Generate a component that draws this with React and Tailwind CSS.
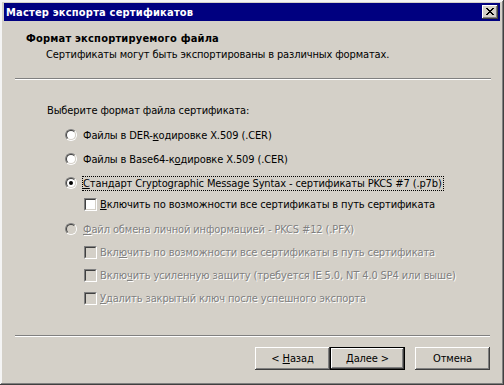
import React from "react";

function Radio({ checked, disabled }) {
  return (
    <span className="relative w-[12px] h-[12px] shrink-0 rounded-full border border-t-[#808080] border-l-[#808080] border-r-white border-b-white">
      <span
        className={
          "absolute inset-0 rounded-full border border-t-[#404040] border-l-[#404040] border-r-[#d4d0c8] border-b-[#d4d0c8] flex items-center justify-center " +
          (disabled ? "bg-[#d4d0c8]" : "bg-white")
        }
      >
        {checked ? <span className="w-[4px] h-[4px] rounded-full bg-black" /> : null}
      </span>
    </span>
  );
}

function Check({ disabled }) {
  return (
    <span className="w-[13px] h-[13px] shrink-0 border border-t-[#808080] border-l-[#808080] border-r-white border-b-white">
      <span
        className={
          "block w-full h-full border border-t-[#404040] border-l-[#404040] border-r-[#d4d0c8] border-b-[#d4d0c8] " +
          (disabled ? "bg-[#d4d0c8]" : "bg-white")
        }
      />
    </span>
  );
}

function Btn({ children, def }) {
  return (
    <div
      className={
        "w-[75px] h-[23px] flex items-center justify-center " +
        (def ? "border border-black" : "")
      }
    >
      <div className="w-full h-full flex items-center justify-center bg-[#d4d0c8] shadow-[inset_-1px_-1px_#404040,inset_1px_1px_#ffffff,inset_-2px_-2px_#808080,inset_2px_2px_#d4d0c8]">
        {children}
      </div>
    </div>
  );
}

const dis = "text-[#808080] [text-shadow:1px_1px_0_#ffffff]";

export default function App() {
  return (
    <div className="w-[504px] h-[385px] bg-[#d4d0c8] text-[11px] leading-[13px] tracking-[-0.12px] text-black [font-family:'DejaVu_Sans_Condensed','DejaVu_Sans',sans-serif] shadow-[inset_-1px_-1px_#404040,inset_1px_1px_#f4f4f4,inset_-2px_-2px_#808080,inset_2px_2px_#f4f4f4] pt-[3px] px-[4px] flex flex-col">
      {/* Title bar */}
      <div className="h-[18px] bg-[#000080] flex items-center justify-between pl-[2px] pr-[2px]">
        <span className="text-white font-bold tracking-[0.2px]">Мастер экспорта сертификатов</span>
        <div className="w-[16px] h-[14px] bg-[#d4d0c8] shadow-[inset_-1px_-1px_#404040,inset_1px_1px_#ffffff,inset_-2px_-2px_#808080,inset_2px_2px_#d4d0c8] relative">
          <svg width="16" height="14" viewBox="0 0 16 14" className="absolute left-0 top-0" shapeRendering="crispEdges">
            <g fill="#000">
              <rect x="4" y="3" width="2" height="1" />
              <rect x="10" y="3" width="2" height="1" />
              <rect x="5" y="4" width="2" height="1" />
              <rect x="9" y="4" width="2" height="1" />
              <rect x="6" y="5" width="4" height="1" />
              <rect x="7" y="6" width="2" height="1" />
              <rect x="6" y="7" width="4" height="1" />
              <rect x="5" y="8" width="2" height="1" />
              <rect x="9" y="8" width="2" height="1" />
              <rect x="4" y="9" width="2" height="1" />
              <rect x="10" y="9" width="2" height="1" />
            </g>
          </svg>
        </div>
      </div>

      {/* Header */}
      <div className="ml-[22px] mt-[11px] font-bold tracking-[0.2px]">Формат экспортируемого файла</div>
      <div className="ml-[42px] mt-[3px]">Сертификаты могут быть экспортированы в различных форматах.</div>
      <div className="ml-[11px] mr-[9px] mt-[17px] h-[2px] border-t border-t-[#808080] border-b border-b-white" />

      {/* Body */}
      <div className="ml-[43px] mt-[24px]">Выберите формат файла сертификата:</div>

      <div className="flex items-center h-[16px] ml-[61px] mt-[10px]">
        <Radio />
        <span className="ml-[5px] border border-transparent px-0">
          Файлы в DER-<span className="underline">к</span>одировке X.509 (.CER)
        </span>
      </div>
      <div className="flex items-center h-[16px] ml-[61px] mt-[8px]">
        <Radio />
        <span className="ml-[5px] border border-transparent">
          Файлы в Base64-к<span className="underline">о</span>дировке X.509 (.CER)
        </span>
      </div>
      <div className="flex items-center h-[16px] ml-[61px] mt-[8px]">
        <Radio checked />
        <span className="ml-[5px] border border-dotted border-black pr-[1px]">
          <span className="underline">С</span>тандарт Cryptographic Message Syntax - сертификаты PKCS #7 (.p7b)
        </span>
      </div>
      <div className="flex items-center h-[16px] ml-[80px] mt-[5px]">
        <Check />
        <span className="ml-[2px] border border-transparent">
          <span className="underline">В</span>ключить по возможности все сертификаты в путь сертификата
        </span>
      </div>
      <div className="flex items-center h-[16px] ml-[61px] mt-[9px]">
        <Radio disabled />
        <span className={"ml-[5px] border border-transparent " + dis}>
          <span className="underline">Ф</span>айл обмена личной информацией - PKCS #12 (.PFX)
        </span>
      </div>
      <div className="flex items-center h-[16px] ml-[80px] mt-[7px]">
        <Check disabled />
        <span className={"ml-[2px] border border-transparent " + dis}>
          Вкл<span className="underline">ю</span>чить по возможности все сертификаты в путь сертификата
        </span>
      </div>
      <div className="flex items-center h-[16px] ml-[80px] mt-[7px]">
        <Check disabled />
        <span className={"ml-[2px] border border-transparent " + dis}>
          Вклю<span className="underline">ч</span>ить усиленную защиту (требуется IE 5.0, NT 4.0 SP4 или выше)
        </span>
      </div>
      <div className="flex items-center h-[16px] ml-[80px] mt-[7px]">
        <Check disabled />
        <span className={"ml-[2px] border border-transparent " + dis}>
          <span className="underline">У</span>далить закрытый ключ после успешного экспорта
        </span>
      </div>

      <div className="ml-[11px] mr-[10px] mt-[29px] h-[2px] border-t border-t-[#808080] border-b border-b-white" />

      <div className="flex justify-end mr-[10px] mt-[10px]">
        <Btn>
          &lt; <span className="underline ml-[3px]">Н</span>азад
        </Btn>
        <Btn def>Далее &gt;</Btn>
        <div className="ml-[10px]">
          <Btn>Отмена</Btn>
        </div>
      </div>
    </div>
  );
}
